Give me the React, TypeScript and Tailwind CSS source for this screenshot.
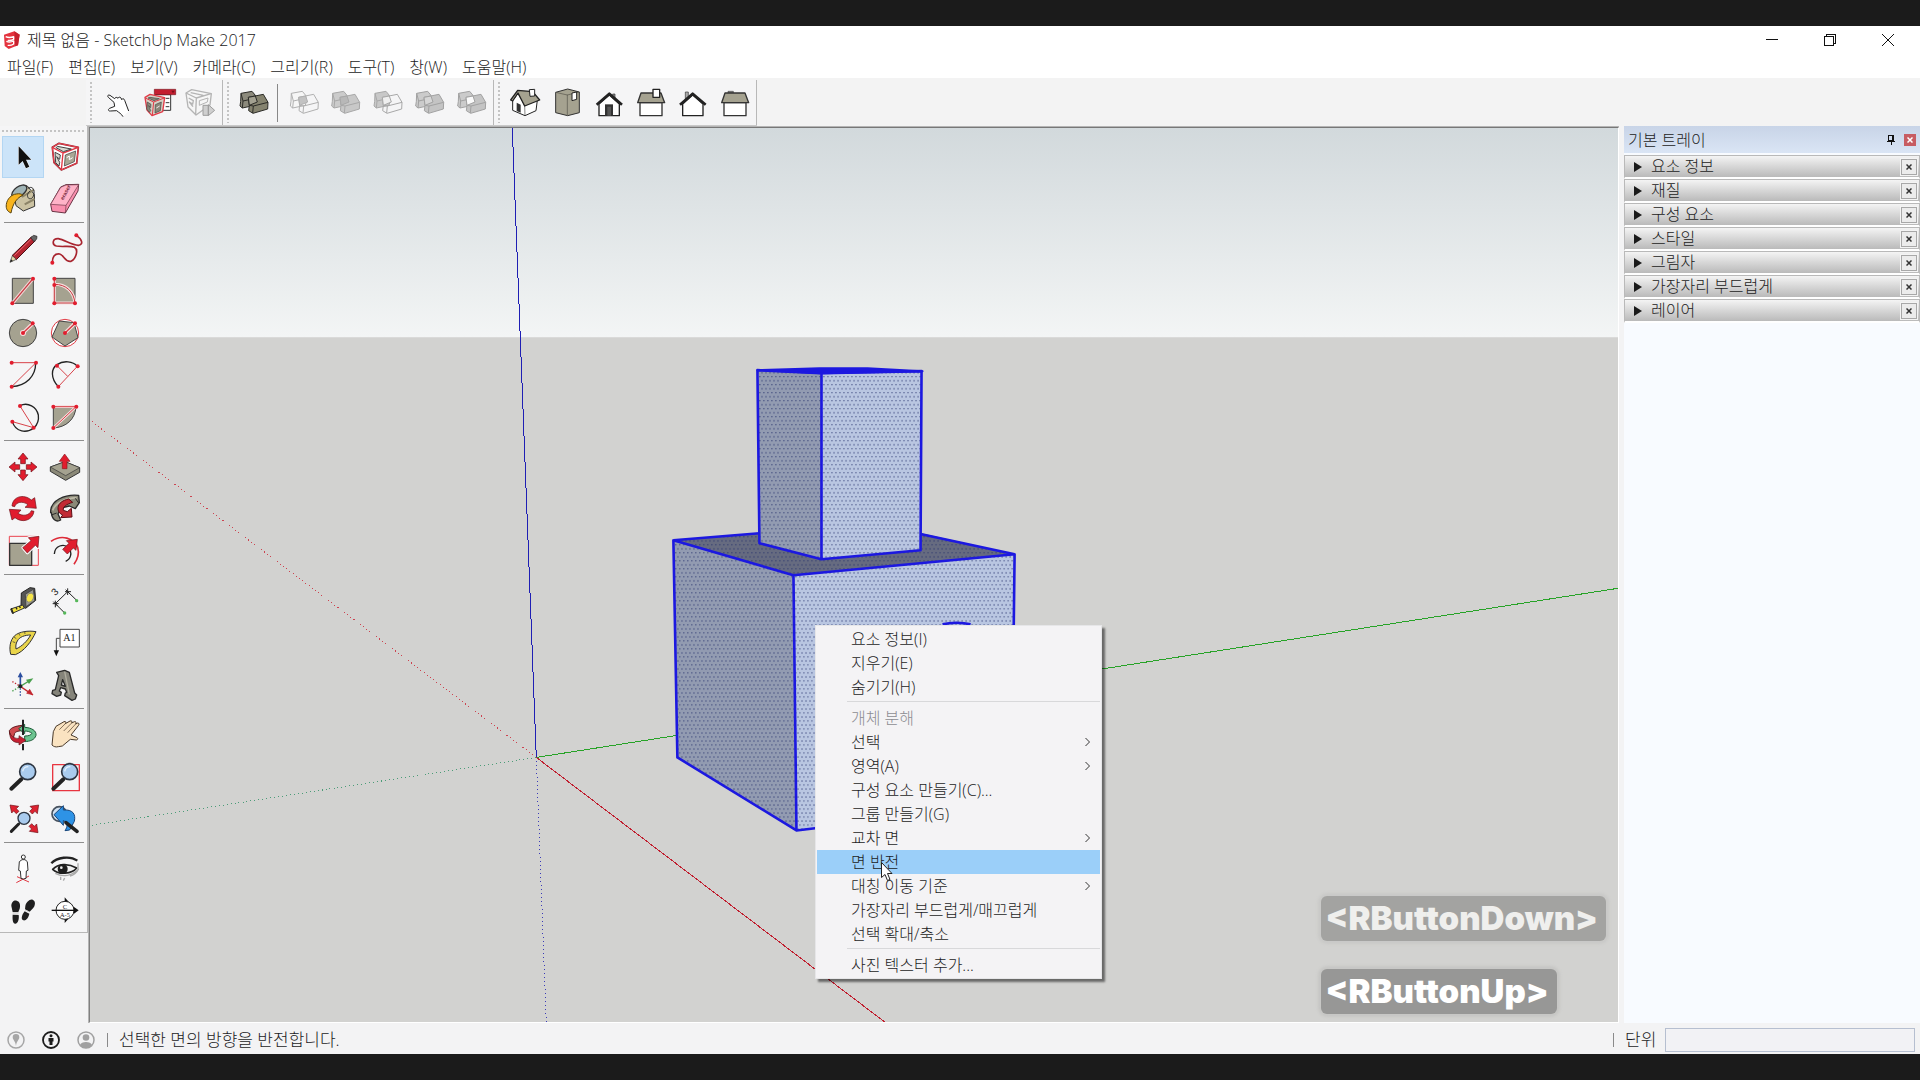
import { useState, type ReactNode } from "react";
import clsx from "clsx";

const FACE = "#a5a290";
const RED = "#e11d2e";

const MENUS = ["파일(F)", "편집(E)", "보기(V)", "카메라(C)", "그리기(R)", "도구(T)", "창(W)", "도움말(H)"];

const TRAY_PANELS = ["요소 정보", "재질", "구성 요소", "스타일", "그림자", "가장자리 부드럽게", "레이어"];

type MenuEntry = { label: string; sub?: boolean; disabled?: boolean } | null;

const CONTEXT_MENU: MenuEntry[] = [
  { label: "요소 정보(I)" },
  { label: "지우기(E)" },
  { label: "숨기기(H)" },
  null,
  { label: "개체 분해", disabled: true },
  { label: "선택", sub: true },
  { label: "영역(A)", sub: true },
  { label: "구성 요소 만들기(C)..." },
  { label: "그룹 만들기(G)" },
  { label: "교차 면", sub: true },
  { label: "면 반전" },
  { label: "대칭 이동 기준", sub: true },
  { label: "가장자리 부드럽게/매끄럽게" },
  { label: "선택 확대/축소" },
  null,
  { label: "사진 텍스터 추가..." },
];

type Tool = { name: string; x: number; y: number; art: ReactNode };

// Tools are drawn on shared sheets of 126 unit tiles, x/y is the tile corner.
function ToolButton({ tool, active, onClick }: { tool: Tool; active?: boolean; onClick?: () => void }) {
  return (
    <button
      type="button"
      title={tool.name}
      aria-label={tool.name}
      onClick={onClick}
      className={clsx("size-[42px] shrink-0", active && "bg-[#cce4f9] outline outline-1 -outline-offset-1 outline-[#b3d6f3]")}
    >
      <svg viewBox={`${tool.x} ${tool.y} 126 126`} className="size-[42px]" fill="none" strokeLinejoin="round">
        {tool.art}
      </svg>
    </button>
  );
}

function Dot({ x, y, r = 6 }: { x: number; y: number; r?: number }) {
  return <circle cx={x} cy={y} r={r} fill={RED} />;
}

/* ---------- large tool set (left) ---------- */

const SELECT_TOOLS: Tool[] = [
  {
    name: "선택",
    x: 6,
    y: 33,
    art: <path d="M56 64v55l12-11 10 22 10-5-10-21h16z" fill="#111" stroke="#fff" strokeWidth="3" paintOrder="stroke" />,
  },
  {
    name: "구성 요소 만들기",
    x: 132,
    y: 33,
    art: (
      <>
        <path d="M157 67l20-12 58 12-5 48-46 20-22-22z" fill="#fff" stroke="#8c2730" strokeWidth="5" />
        <path d="M157 67l20-12 58 12-5 48-46 20-22-22z" stroke="#f0404e" strokeWidth="3" />
        <path d="M157 67l32 17 46-17M189 84l-5 51" stroke="#e33543" strokeWidth="4" />
        <path d="M196 90l31-12-4 32-30 13z" fill="#aaa795" stroke="#333" strokeWidth="2" />
        <path d="M172 64l42 8-24 8-22-12zM165 82l16 8-2 13-9-8 9 17-2 11-10-10z" fill="#d8d8d0" stroke="#444" strokeWidth="3" />
        <path d="M200 98l8-5v11l10-6" stroke="#fff" strokeWidth="3" />
      </>
    ),
  },
  {
    name: "페인트통",
    x: 6,
    y: 159,
    art: (
      <>
        <path d="M40 200l8 42 22 16 34-14-1-36-22-26z" fill="#cbc2a2" stroke="#333" strokeWidth="3" />
        <path d="M66 216l36-22M74 238l30-16" stroke="#8c8468" strokeWidth="6" />
        <ellipse cx="58" cy="199" rx="26" ry="14" transform="rotate(-36 58 199)" fill="#9fb3b5" stroke="#333" strokeWidth="4" />
        <path d="M19 238c2-16 16-30 30-31 10-2 14 0 20 3-16 8-30 22-36 54-10-4-16-12-14-26z" fill="#f8b41e" stroke="#5a4510" strokeWidth="3" />
        <path d="M84 190c12-8 20 2 18 16-2 12-8 18-16 14-6-6-4-16 4-22" stroke="#333" strokeWidth="3" />
      </>
    ),
  },
  {
    name: "지우개",
    x: 132,
    y: 159,
    art: (
      <>
        <path d="M152 238l30-52 16-7 38-1-2 20-38 66-40-5z" fill="#f98fae" stroke="#6a3444" strokeWidth="3" />
        <path d="M152 238l46 3 38-62-38 1-16 7z" fill="#ffb3c8" stroke="#6a3444" strokeWidth="2" />
        <path d="M198 241l-2 23" stroke="#6a3444" strokeWidth="2" />
        <text x="0" y="0" transform="translate(190 226) rotate(-62)" fontSize="16" fontWeight="bold" fill="#7b2a40" fontFamily="Liberation Sans">
          eraser
        </text>
      </>
    ),
  },
];

const DRAW_TOOLS: Tool[] = [
  {
    name: "선",
    x: 6,
    y: 309,
    art: (
      <>
        <path d="M36 392l58-56 12 11-57 57z" fill="#b32631" stroke="#4d1016" strokeWidth="3" />
        <path d="M43 392l52-51" stroke="#e9626c" strokeWidth="3" />
        <path d="M30 412l7-20 12 11z" fill="#e6d6a8" stroke="#333" strokeWidth="2" />
        <path d="M30 412l3-9 6 5z" fill="#222" />
        <path d="M92 338l9-7 10 3-1 8-8 8z" fill="#666" stroke="#222" strokeWidth="2" />
      </>
    ),
  },
  {
    name: "자유형",
    x: 132,
    y: 309,
    art: (
      <>
        <path d="M229 331c18 12 22 28 6 30-20 0-40-16-60-20-18-1-20 18-6 22 18 4 40-2 54 4 14 8 4 36-10 42-18 4-20-18-34-22-16-2-22 10-22 25" stroke="#a8242f" strokeWidth="5" />
        <Dot x={229} y={331} />
        <Dot x={157} y={413} />
      </>
    ),
  },
  {
    name: "직사각형",
    x: 6,
    y: 435,
    art: (
      <>
        <path d="M37 460h63v75H37z" fill={FACE} stroke="#444" strokeWidth="3" />
        <path d="M37 535l62-74" stroke="#f4d6d6" strokeWidth="10" />
        <path d="M37 535l62-74" stroke="#c43c42" strokeWidth="4" />
        <Dot x={37} y={535} />
        <Dot x={99} y={461} />
      </>
    ),
  },
  {
    name: "회전된 직사각형",
    x: 132,
    y: 435,
    art: (
      <>
        <path d="M164 460h61v75h-61z" fill={FACE} stroke="#444" strokeWidth="3" />
        <path d="M163 478c36 0 58 22 62 56H163V461" stroke="#f7dede" strokeWidth="9" />
        <path d="M163 478c36 0 58 22 62 56H163V461" stroke="#c43c42" strokeWidth="3" />
        <Dot x={163} y={461} />
        <Dot x={163} y={480} />
        <Dot x={163} y={535} />
        <Dot x={225} y={535} />
      </>
    ),
  },
  {
    name: "원",
    x: 6,
    y: 561,
    art: (
      <>
        <circle cx="69" cy="624" r="41" fill={FACE} stroke="#444" strokeWidth="3" />
        <path d="M69 624l29-28" stroke="#f7dede" strokeWidth="11" />
        <circle cx="69" cy="624" r="9" fill="#f7dede" />
        <path d="M69 624l29-28" stroke="#d43940" strokeWidth="4" />
        <Dot x={69} y={624} />
        <Dot x={98} y={595} />
      </>
    ),
  },
  {
    name: "다각형",
    x: 132,
    y: 561,
    art: (
      <>
        <circle cx="195" cy="624" r="41" fill="#fff" stroke="#e23a44" strokeWidth="3" />
        <path d="M178 588l44 5 12 45-39 25-39-27z" fill={FACE} stroke="#444" strokeWidth="3" />
        <path d="M195 624l29-28" stroke="#f7dede" strokeWidth="11" />
        <path d="M195 624l29-28" stroke="#d43940" strokeWidth="4" />
        <Dot x={195} y={624} />
        <Dot x={225} y={595} />
      </>
    ),
  },
  {
    name: "호",
    x: 6,
    y: 687,
    art: (
      <>
        <path d="M107 714c0 40-28 68-72 71" stroke="#222" strokeWidth="4" />
        <path d="M35 713h73l-73 72" stroke="#d8434a" strokeWidth="3" />
        <Dot x={35} y={713} />
        <Dot x={108} y={713} />
        <Dot x={35} y={785} />
      </>
    ),
  },
  {
    name: "2점 호",
    x: 132,
    y: 687,
    art: (
      <>
        <path d="M175 785c-24-26-22-54-4-66 20-14 48-10 61 5" stroke="#222" strokeWidth="4" />
        <path d="M171 722l32 32M175 785l57-61" stroke="#d8434a" strokeWidth="3" />
        <Dot x={171} y={722} />
        <Dot x={233} y={724} />
        <Dot x={175} y={785} />
      </>
    ),
  },
  {
    name: "3점 호",
    x: 6,
    y: 813,
    art: (
      <>
        <path d="M60 842c24-12 50 4 55 28 2 16-3 29-13 38-22 18-55 14-65-18" stroke="#222" strokeWidth="4" />
        <path d="M60 843l41 65-64-18" stroke="#d8434a" strokeWidth="3" />
        <Dot x={60} y={843} />
        <Dot x={101} y={908} />
        <Dot x={37} y={890} />
      </>
    ),
  },
  {
    name: "파이",
    x: 132,
    y: 813,
    art: (
      <>
        <path d="M160 845h68c-2 38-30 62-68 64z" fill={FACE} stroke="#444" strokeWidth="3" />
        <path d="M160 909l68-64h-68" stroke="#f7dede" strokeWidth="8" />
        <path d="M160 909l68-64h-68" stroke="#d8434a" strokeWidth="3" />
        <Dot x={160} y={845} />
        <Dot x={229} y={845} />
        <Dot x={160} y={909} />
      </>
    ),
  },
];

const EDIT_TOOLS: Tool[] = [
  {
    name: "이동",
    x: 6,
    y: 33,
    art: (
      <path
        d="M69 54l15 18h-8v14H62V72h-8zM69 137l-15-18h8v-14h14v14h8zM27 96l18-15v8h14v14H45v8zM111 96l-18-15v8H79v14h14v8z"
        fill={RED}
        stroke="#6d1118"
        strokeWidth="2"
      />
    ),
  },
  {
    name: "밀기/끌기",
    x: 132,
    y: 33,
    art: (
      <>
        <path d="M151 96l44-16 44 18v14l-42 24-46-27z" fill="#8b8978" stroke="#333" strokeWidth="3" />
        <path d="M151 96l44-16 44 18-42 24z" fill={FACE} stroke="#333" strokeWidth="2" />
        <path d="M194 57l16 22h-9v22h-14V79h-9z" fill={RED} stroke="#8c1820" strokeWidth="2" />
      </>
    ),
  },
  {
    name: "회전",
    x: 6,
    y: 159,
    art: (
      <path
        d="M36 213c2-28 34-38 58-18l10-7 5 32-34-3 9-8c-16-12-36-8-40 6zM102 229c-4 28-36 36-57 19l-9 7-8-32 35 2-9 10c15 10 34 6 40-8z"
        fill={RED}
        stroke="#6d1118"
        strokeWidth="2"
      />
    ),
  },
  {
    name: "따라가기",
    x: 132,
    y: 159,
    art: (
      <>
        <path d="M152 233c-2-38 44-56 84-52l2 22-12 18-18-8-26 6-8 18 8 18c-14 8-26-2-28-22z" fill="#8b8978" stroke="#2a2a2a" strokeWidth="4" />
        <path d="M158 226c10-24 40-36 72-38" stroke="#bdbaa8" strokeWidth="5" />
        <path d="M226 190l10 14M154 240l16-6" stroke="#2a2a2a" strokeWidth="3" />
        <path d="M174 218c2-14 14-22 32-26l12 10c-20 6-30 14-28 24l12 4 12-10 2 26-34 2 6-8c-10-4-15-12-14-22z" fill="#c22a34" stroke="#5d0f16" strokeWidth="3" />
      </>
    ),
  },
  {
    name: "배율",
    x: 6,
    y: 285,
    art: (
      <>
        <path d="M28 304h87v87H28z" stroke="#ea4450" strokeWidth="3" />
        <path d="M29 325h66v66H29z" fill={FACE} stroke="#333" strokeWidth="4" />
        <path d="M117 304l-3 34-8-7-24 23-14-16 25-21-8-9z" fill={RED} stroke="#fff" strokeWidth="8" paintOrder="stroke" />
        <path d="M117 304l-3 34-8-7-24 23-14-16 25-21-8-9z" stroke="#6d1118" strokeWidth="2" />
      </>
    ),
  },
  {
    name: "오프셋",
    x: 132,
    y: 285,
    art: (
      <>
        <path d="M153 319c32-22 68-10 80 18 5 18 0 36-11 51" stroke="#dd2b38" strokeWidth="5" />
        <path d="M163 357c1-24 28-34 43-18 12 14 6 34-9 40" stroke="#222" strokeWidth="4" />
        <path d="M232 313l-4 33-8-7-18 18-14-14 19-18-8-8z" fill={RED} stroke="#6d1118" strokeWidth="2" />
      </>
    ),
  },
];

const MEASURE_TOOLS: Tool[] = [
  {
    name: "줄자 도구",
    x: 6,
    y: 435,
    art: (
      <>
        <path d="M64 474l26-16 14 2 3 36-30 24-14-6z" fill="#555" stroke="#222" strokeWidth="3" />
        <path d="M76 478l24-15 4 34-26 18z" fill="#9b9b94" stroke="#333" strokeWidth="2" />
        <ellipse cx="90" cy="488" rx="10" ry="14" fill="#f6e548" stroke="#777" strokeWidth="2" transform="rotate(20 90 488)" />
        <path d="M68 510L32 522l5 13 36-16z" fill="#f3e23e" stroke="#333" strokeWidth="3" />
        <path d="M34 520l6 16M48 517l3 6M58 513l3 6" stroke="#222" strokeWidth="4" />
      </>
    ),
  },
  {
    name: "치수",
    x: 132,
    y: 435,
    art: (
      <>
        <path d="M166 506l37-36M166 506l28 28M203 470l27 26M158 506h18M166 497v20M195 470h18M203 460v20M160 500l13 13M197 464l13 13" stroke="#222" strokeWidth="3" />
        <text x="0" y="0" transform="translate(166 484) rotate(-45)" fontSize="30" fill="#222" fontFamily="Liberation Sans">
          3
        </text>
        <circle cx="194" cy="534" r="5" fill="#56b85a" />
        <circle cx="230" cy="497" r="5" fill="#56b85a" />
      </>
    ),
  },
  {
    name: "각도기",
    x: 6,
    y: 561,
    art: (
      <>
        <path d="M108 590c-24-4-50 0-64 12-14 14-17 36-12 56l14 1c26-10 48-38 62-69z" fill="#ead54a" stroke="#333" strokeWidth="3" />
        <path d="M92 600c-18 0-34 6-40 18-5 8-5 16-4 24 18-8 34-24 44-42z" fill="#f7f7f7" stroke="#333" strokeWidth="3" />
        <path d="M38 620l8 3M42 606l7 5M56 595l4 7M74 590l1 7" stroke="#333" strokeWidth="2" />
      </>
    ),
  },
  {
    name: "텍스트",
    x: 132,
    y: 561,
    art: (
      <>
        <path d="M180 583h58v53h-58z" fill="#fff" stroke="#444" strokeWidth="3" />
        <text x="190" y="619" fontSize="30" fill="#222" fontFamily="Liberation Serif">
          A1
        </text>
        <path d="M179 610h-10v38" stroke="#444" strokeWidth="3" />
        <path d="M161 646h16l-8 18z" fill="#111" />
      </>
    ),
  },
  {
    name: "축",
    x: 6,
    y: 687,
    art: (
      <>
        <path d="M61 754l38 26" stroke="#c2262e" strokeWidth="4" />
        <path d="M98 779l-18-4 9-12z" fill="#c2262e" stroke="#c2262e" strokeWidth="2" />
        <path d="M61 754V722" stroke="#2c4fa0" strokeWidth="5" />
        <path d="M61 711l8 16H53z" fill="#2c4fa0" />
        <path d="M61 754l26-16" stroke="#4aa04e" strokeWidth="4" />
        <path d="M100 730l-13 17-9-13z" fill="#4aa04e" />
        <path d="M61 760v26" stroke="#2c4fa0" strokeWidth="4" strokeDasharray="4 5" />
        <path d="M56 751l-20-12" stroke="#c2262e" strokeWidth="4" strokeDasharray="4 5" />
        <path d="M56 757l-20 12" stroke="#4aa04e" strokeWidth="4" strokeDasharray="4 5" />
        <circle cx="61" cy="754" r="6" fill="#222" />
      </>
    ),
  },
  {
    name: "3D 텍스트",
    x: 132,
    y: 687,
    art: (
      <>
        <path
          fillRule="evenodd"
          d="M170 712l24-6 14 6 16 62 6 6-4 12-10 4-22-14 2-8 4-2-4-10-14-4-4 10 6 4-2 8-12 4-14-8 2-10 8-2 10-42zM188 734l-4 16 12 4z"
          fill="#85847a"
          stroke="#2a2a2a"
          strokeWidth="4"
        />
        <path d="M194 710l14 68" stroke="#b0aea0" strokeWidth="4" />
      </>
    ),
  },
];

const CAMERA_TOOLS: Tool[] = [
  {
    name: "궤도",
    x: 6,
    y: 42,
    art: (
      <>
        <path d="M28 92c6-10 20-14 38-16v16c-14 1-20 4-22 8l-4 14c-8-4-12-12-12-22z" fill="#cf4a4e" stroke="#5d1a1e" strokeWidth="3" />
        <path d="M108 106c-4 14-18 18-34 19v-17c12 0 18-2 22-8-6-5-14-7-22-7v8l-18-15 18-13v9c20 1 36 10 34 24z" fill="#6cc490" stroke="#1d5c38" strokeWidth="3" />
        <path d="M29 98c6 14 18 18 28 17v-8l21 14-21 14v-7c-16 0-28-8-28-30z" fill="#c51f32" stroke="#5d1a1e" strokeWidth="2" />
        <path d="M69 59v46M69 132v19" stroke="#222" strokeWidth="6" />
      </>
    ),
  },
  {
    name: "이동 보기",
    x: 132,
    y: 42,
    art: (
      <>
        <path
          d="M156 135l4-40 8-16 24-14c5-2 8 2 4 6l14-8c5-2 8 2 5 6l8-4c5-1 7 3 4 7l6-3c5 0 5 5 2 8l-22 28 18 8c4 2 2 7-2 7l-18-2-24 20-12 2c-8 2-14 0-19-5z"
          fill="#fae3c1"
          stroke="#4a3a2a"
          strokeWidth="3"
        />
        <path d="M196 71l-18 18M215 69l-24 24M227 72l-24 26" stroke="#4a3a2a" strokeWidth="2" />
      </>
    ),
  },
  {
    name: "확대/축소",
    x: 6,
    y: 168,
    art: (
      <>
        <path d="M34 266l30-28" stroke="#222" strokeWidth="12" strokeLinecap="round" />
        <circle cx="83" cy="215" r="24" fill="#a9cbee" stroke="#2c3440" strokeWidth="5" />
        <path d="M68 214c2-10 10-14 17-14" stroke="#e4f0fb" strokeWidth="4" />
      </>
    ),
  },
  {
    name: "창 확대/축소",
    x: 132,
    y: 168,
    art: (
      <>
        <path d="M158 194h80v78h-80z" stroke="#e83540" strokeWidth="4" />
        <path d="M160 266l30-28" stroke="#222" strokeWidth="12" strokeLinecap="round" />
        <circle cx="209" cy="215" r="24" fill="#a9cbee" stroke="#2c3440" strokeWidth="5" />
        <path d="M194 214c2-10 10-14 17-14" stroke="#e4f0fb" strokeWidth="4" />
      </>
    ),
  },
  {
    name: "범위 확대/축소",
    x: 6,
    y: 294,
    art: (
      <>
        <path d="M34 394l22-22" stroke="#222" strokeWidth="9" strokeLinecap="round" />
        <circle cx="72" cy="355" r="18" fill="#a9cbee" stroke="#2c3440" strokeWidth="4" />
        <path d="M30 315l26 4-7 7 8 8-8 7-8-8-6 6zM116 315l-4 26-7-7-8 8-8-8 8-8-7-7zM114 398l-26-4 7-7-8-8 8-8 8 8 7-7z" fill="#dc2230" stroke="#6d1118" strokeWidth="2" />
      </>
    ),
  },
  {
    name: "이전",
    x: 132,
    y: 294,
    art: (
      <>
        <circle cx="178" cy="342" r="22" fill="#cfe0f2" stroke="#47525f" strokeWidth="5" />
        <path d="M162 344l28-27v13c28-2 38 12 33 34l-14 26-14 2c8-12 10-24-5-30v14z" fill="#2e93e6" stroke="#17457a" strokeWidth="3" />
        <path d="M198 368l33 26" stroke="#222" strokeWidth="11" strokeLinecap="round" />
      </>
    ),
  },
];

const WALK_TOOLS: Tool[] = [
  {
    name: "카메라 배치",
    x: 6,
    y: 444,
    art: (
      <>
        <path d="M49 548l38-20M51 530l36 16" stroke="#e03640" strokeWidth="3" />
        <circle cx="70" cy="471" r="6" fill="#fff" stroke="#333" strokeWidth="3" />
        <path d="M66 479h9l7 6 2 26-5 2-1 22-8 2-7-2-2-22-5-2 2-26z" fill="#fff" stroke="#333" strokeWidth="3" />
      </>
    ),
  },
  {
    name: "둘러보기",
    x: 132,
    y: 444,
    art: (
      <>
        <path d="M154 490c16-18 56-24 78-8" stroke="#222" strokeWidth="7" />
        <path d="M158 508c16-16 44-20 72-4-14 18-54 22-72 4z" fill="#f2f2f2" stroke="#222" strokeWidth="5" />
        <circle cx="188" cy="507" r="15" fill="#1c1c1c" />
        <circle cx="184" cy="503" r="4" fill="#eee" />
        <path d="M166 520c22 12 48 8 70-12M182 530v10M194 534l-4 8M210 528c12-2 20-10 26-22M234 490v18" stroke="#aaa" strokeWidth="4" />
      </>
    ),
  },
  {
    name: "이동",
    x: 6,
    y: 570,
    art: (
      <>
        <path d="M34 618c0-12 8-18 16-16 10 2 12 14 9 24l-4 10H38zM38 644l18 1c2 12-2 26-10 26s-9-14-8-27z" fill="#1f1f1f" />
        <path d="M76 618c2-12 14-22 22-19 10 4 8 18 1 26l-10 10-14-7zM74 634l14 7c-2 12-10 22-18 20s-5-16 4-27z" fill="#1f1f1f" />
        <path d="M38 638h18M38 642h18M75 630l13 6" stroke="#bbb" strokeWidth="2" />
      </>
    ),
  },
  {
    name: "단면 평면",
    x: 132,
    y: 570,
    art: (
      <>
        <path d="M194 592l34 39-34 38z" fill="#111" />
        <circle cx="195" cy="631" r="27" fill="#fff" stroke="#222" strokeWidth="3" />
        <path d="M155 631h76" stroke="#111" strokeWidth="4" />
        <path d="M222 621l14 10-14 10z" fill="#111" />
        <text x="188" y="626" fontSize="20" fill="#222" fontFamily="Liberation Serif">
          C
        </text>
        <text x="180" y="651" fontSize="19" fill="#222" fontFamily="Liberation Serif">
          A-5
        </text>
      </>
    ),
  },
];

const TOOL_GROUPS = [SELECT_TOOLS, DRAW_TOOLS, EDIT_TOOLS, MEASURE_TOOLS, CAMERA_TOOLS, WALK_TOOLS];

/* ---------- top tool bars ---------- */

const WAREHOUSE_TOOLS: Tool[] = [
  {
    name: "상호 작용",
    x: 36,
    y: 12,
    art: (
      <path
        d="M134 99l-12-32c-2-6-7-6-9-2l-2-5c-3-4-8-3-9 1-3-4-8-4-10 1L78 52c-6-3-9 2-5 6l17 15 2 12-15 6c-6 3-4 9 2 8l19-1c7 6 14 9 19 18"
        fill="#fff"
        stroke="#222"
        strokeWidth="3"
      />
    ),
  },
  {
    name: "구성 요소 속성",
    x: 162,
    y: 12,
    art: (
      <>
        <path d="M214 50h46v47h-46z" fill="#fff" stroke="#333" strokeWidth="3" />
        <path d="M211 34h64v16h-64z" fill="#c41e30" stroke="#7a121d" strokeWidth="2" />
        <path d="M262 38h10l-5 8z" fill="#7a121d" />
        <path d="M245 61h11M245 74h11M245 86h11" stroke="#333" strokeWidth="3" />
        <path d="M183 58l15-9 44 10-6 42-32 12-15-17z" fill="#d5d1c4" stroke="#e23a48" strokeWidth="4" />
        <path d="M184 60l25 12 32-12M209 72l-4 40" stroke="#e23a48" strokeWidth="3" />
        <path d="M198 58l28 4-16 6-18-8zM190 72l11 7-1 10-6-6 6 15-4 5-8-10zM214 80l18-8-3 26-16 7z" fill="#8b8779" stroke="#444" strokeWidth="2" />
        <path d="M217 90l10-6" stroke="#f3e6e6" strokeWidth="3" />
      </>
    ),
  },
  {
    name: "구성 요소 옵션",
    x: 288,
    y: 12,
    art: (
      <>
        <path d="M306 45l17-10 59 12-4 34-42 30-24-24z" fill="#f6f6f6" stroke="#b4b4b4" strokeWidth="4" />
        <path d="M306 45l31 15 44-13M337 60l-2 48M320 44l38 8M314 60l14 8-2 10-10-6 11 14" stroke="#b4b4b4" strokeWidth="4" />
        <path d="M346 68l26-8-2 12-24 10z" stroke="#b4b4b4" strokeWidth="3" />
        <path d="M357 82h16v30h-16zM373 80l19 17-19 16z" fill="#cfcfcf" stroke="#9d9d9d" strokeWidth="3" />
      </>
    ),
  },
];

function Solid({ x, a, b, overlap, stroke }: { x: number; a: string; b: string; overlap: string; stroke: string }) {
  return (
    <g transform={`translate(${x} 39)`} stroke={stroke} strokeWidth="3">
      <path d="M3 7L36 1l10 12 1 22-2 8-38 8-7-6 2-14z" fill={a} />
      <path d="M3 7l6 23-2 21M9 30l18-4" />
      <path d="M25 19l45-9 14 24-1 20-44 13-13-8 2-16z" fill={b} />
      <path d="M84 34L40 45l-2 21M40 45l-12-2" />
      <path d="M25 19l21-4 6 18-24 10z" fill={overlap} />
    </g>
  );
}

const SHELL_TOOL: Tool = {
  name: "외부 셸",
  x: 444,
  y: 12,
  art: <Solid x={465} a="#8c8a7c" b="#85836f" overlap="#a3a191" stroke="#2b2b27" />,
};

const SOLID_TOOLS: Tool[] = [
  { name: "교차", x: 594, y: 12, art: <Solid x={616} a="#f6f6f6" b="none" overlap="#c2c2c2" stroke="#b0b0b0" /> },
  { name: "결합", x: 720, y: 12, art: <Solid x={740} a="#cbcbcb" b="#c8c8c8" overlap="#b8b8b8" stroke="#a8a8a8" /> },
  { name: "빼기", x: 846, y: 12, art: <Solid x={867} a="#c8c8c8" b="none" overlap="#efefef" stroke="#a8a8a8" /> },
  { name: "자르기", x: 972, y: 12, art: <Solid x={992} a="#cbcbcb" b="#c4c4c4" overlap="#d6d6d6" stroke="#a2a2a2" /> },
  { name: "분할", x: 1098, y: 12, art: <Solid x={1118} a="#cbcbcb" b="#c4c4c4" overlap="#fafafa" stroke="#a2a2a2" /> },
];

const VIEW_TOOLS: Tool[] = [
  {
    name: "등각 투영",
    x: 72,
    y: 6,
    art: (
      <>
        <path d="M98 62l16-22 20 36 38-16-4 32-33 15-37-16z" fill="#fff" stroke="#222" strokeWidth="3" />
        <path d="M134 76l1 31" stroke="#444" strokeWidth="2" />
        <path d="M110 68l12 6v24l-12-5z" fill="#333" />
        <path d="M92 60l21-29 45 4 21 25-45 18-20-39-16 24z" fill={FACE} stroke="#222" strokeWidth="4" />
        <path d="M148 29l16-1v20l-14 1z" fill="#fff" stroke="#222" strokeWidth="3" />
      </>
    ),
  },
  {
    name: "맨 위",
    x: 198,
    y: 6,
    art: (
      <>
        <path d="M227 37l36-10 35 9v62l-35 9-36-9z" fill={FACE} stroke="#333" strokeWidth="3" />
        <path d="M262 44v62M227 37l35 8 36-9" stroke="#55534a" strokeWidth="2" />
        <path d="M276 39l14-3v22l-14 4z" fill="#fff" stroke="#222" strokeWidth="3" />
      </>
    ),
  },
  {
    name: "앞",
    x: 324,
    y: 6,
    art: (
      <>
        <path d="M398 42h7v12h-7z" fill="#888" stroke="#333" strokeWidth="2" />
        <path d="M357 72v35h61V72l-30-27z" fill="#fff" stroke="#222" strokeWidth="4" />
        <path d="M350 74l38-33 38 33" stroke="#222" strokeWidth="8" />
        <path d="M375 73h24v34h-24z" fill="#333" />
        <path d="M382 80h11v27h-11z" fill="#555" />
      </>
    ),
  },
  {
    name: "오른쪽",
    x: 450,
    y: 6,
    art: (
      <>
        <path d="M480 68h66v39h-66z" fill="#fff" stroke="#333" strokeWidth="4" />
        <path d="M483 39h60l11 29h-81z" fill={FACE} stroke="#333" strokeWidth="4" />
        <path d="M519 28h20v24h-20z" fill="#fff" stroke="#222" strokeWidth="4" />
      </>
    ),
  },
  {
    name: "뒤로",
    x: 576,
    y: 6,
    art: (
      <>
        <path d="M616 36h9v20h-9z" fill="#aaa" stroke="#333" strokeWidth="2" />
        <path d="M608 72v35h61V72l-31-27z" fill="#fff" stroke="#222" strokeWidth="4" />
        <path d="M600 74l38-33 39 33" stroke="#222" strokeWidth="8" />
      </>
    ),
  },
  {
    name: "왼쪽",
    x: 702,
    y: 6,
    art: (
      <>
        <path d="M744 34h16v6h-16z" fill="#888" stroke="#444" strokeWidth="2" />
        <path d="M732 68h66v39h-66z" fill="#fff" stroke="#333" strokeWidth="4" />
        <path d="M735 39h60l11 29h-81z" fill={FACE} stroke="#333" strokeWidth="4" />
      </>
    ),
  },
];

/* ---------- parts ---------- */

function Gripper() {
  return (
    <span className="mx-1 my-0.5 w-0.5 shrink-0 self-stretch bg-[repeating-linear-gradient(to_bottom,#c4c4c4_0_2px,transparent_2px_4px)]" />
  );
}

function TitleBar() {
  return (
    <header className="flex h-[30px] items-center bg-white px-[3px] pb-0.5">
      <svg viewBox="0 0 54 60" className="h-5 w-[18px]" fill="none" strokeLinejoin="round">
        <path d="M3 14L34 4l16 10-5 32-28 11-12-9z" fill="#e4333e" />
        <path d="M34 4l16 10-5 32-8 3z" fill="#c5222e" />
        <path d="M8 20c8 4 16 3 24 0v8c-8 4-12 4-18 3M10 34c8 4 14 3 22-1v9c-6 4-12 5-18 4" stroke="#fff" strokeWidth="4" />
      </svg>
      <h1 className="pl-1.5 text-base leading-6 font-light text-[#222]">제목 없음 - SketchUp Make 2017</h1>
      <div className="ml-auto flex">
        <button type="button" aria-label="최소화" className="flex h-7 w-[58px] items-center justify-center">
          <svg viewBox="0 0 12 12" className="size-3" stroke="#111" shapeRendering="crispEdges">
            <path d="M0 5.5h12" />
          </svg>
        </button>
        <button type="button" aria-label="이전 크기로" className="flex h-7 w-[58px] items-center justify-center">
          <svg viewBox="0 0 12 12" className="size-3" fill="none" stroke="#111" shapeRendering="crispEdges">
            <path d="M.5 2.5h9v9h-9zM2.5 2.5v-2h9v9h-2" />
          </svg>
        </button>
        <button type="button" aria-label="닫기" className="flex h-7 w-[58px] items-center justify-center">
          <svg viewBox="0 0 12 12" className="size-3" stroke="#111">
            <path d="M0 0l12 12M12 0L0 12" />
          </svg>
        </button>
      </div>
    </header>
  );
}

function MenuBar() {
  return (
    <nav className="flex h-[22px] items-center gap-[15px] bg-white pl-[7px]">
      {MENUS.map((m) => (
        <button key={m} type="button" className="text-base leading-5 font-light whitespace-nowrap">
          {m}
        </button>
      ))}
    </nav>
  );
}

function TopToolbar() {
  return (
    <div className="flex h-12 bg-[#f3f3f3] pt-0.5 pl-[86px]">
      <div className="flex h-[46px] items-stretch border-b border-[#c9c9c9] bg-[#f5f5f6]">
        <div className="flex items-center border-r border-[#b8b8b8]">
          <Gripper />
          {WAREHOUSE_TOOLS.map((t) => <ToolButton key={t.name} tool={t} />)}
        </div>
        <div className="flex items-center border-r border-[#b8b8b8]">
          <Gripper />
          <ToolButton tool={SHELL_TOOL} />
          <span className="mr-[5px] ml-0.5 h-[38px] w-px bg-[#888]" />
          {SOLID_TOOLS.map((t) => <ToolButton key={t.name} tool={t} />)}
        </div>
        <div className="flex items-center border-r border-[#b8b8b8]">
          <Gripper />
          {VIEW_TOOLS.map((t) => <ToolButton key={t.name} tool={t} />)}
        </div>
      </div>
    </div>
  );
}

function LeftToolbar() {
  const [active, setActive] = useState("선택-0");
  return (
    <aside className="w-[88px] shrink-0">
      <div className="border-r border-b border-[#b8b8b8] bg-[#f5f5f6] pt-1 pr-px pl-0.5">
        <div className="mb-1 h-0.5 bg-[repeating-linear-gradient(to_right,#c4c4c4_0_2px,transparent_2px_4px)]" />
        {TOOL_GROUPS.map((group, i) => (
          <div key={i}>
            {i > 0 && <div className="mx-0.5 mt-0.5 mb-[5px] h-px bg-[#8e8e8e]" />}
            <div className="grid grid-cols-[42px_42px]">
              {group.map((t) => {
                const id = `${t.name}-${i}`;
                return <ToolButton key={id} tool={t} active={active === id} onClick={() => setActive(id)} />;
              })}
            </div>
          </div>
        ))}
      </div>
    </aside>
  );
}

function Scene() {
  return (
    <svg viewBox="91 128 1527 894" preserveAspectRatio="xMinYMin slice" className="block size-full" fill="none">
      <defs>
        <linearGradient id="sky" x1="0" y1="0" x2="0" y2="1">
          <stop offset="0" stopColor="#d2d9dc" />
          <stop offset="1" stopColor="#f3f5f5" />
        </linearGradient>
        <pattern id="dots" width="4" height="8" patternUnits="userSpaceOnUse">
          <path d="M0 0h1v1H0zM2 4h1v1H2z" fill="#24306b" />
        </pattern>
      </defs>
      <path d="M91 128h1527v209H91z" fill="url(#sky)" />
      <path d="M91 337h1527v685H91z" fill="#d2d2d0" />

      {/* axes */}
      <g shapeRendering="crispEdges">
        <path d="M513 128l24 629" stroke="#1f1fb4" />
        <path d="M537 757l10 265" stroke="#3a3ab8" strokeDasharray="1 3" />
        <path d="M537 757l1081-169" stroke="#27a327" />
        <path d="M537 757L91 825" stroke="#4c9c78" strokeDasharray="1 3" />
        <path d="M537 757l349 265" stroke="#c02030" />
        <path d="M537 757L91 420" stroke="#cc4450" strokeDasharray="1 3" />
      </g>

      {/* stacked boxes, all faces selected */}
      <path d="M674 540l120 35 3 255-119-73z" fill="#929bb1" />
      <path d="M794 575l221-21-3 250-215 26z" fill="#b9c6e1" />
      <path d="M674 540l86-7h162l93 21-221 21z" fill="#666b80" />
      <path d="M759 370l63 3v186l-62-16z" fill="#929bb1" />
      <path d="M822 373l100-2-1 179-99 9z" fill="#b9c6e1" />
      <path
        d="M674 540l120 35 3 255-119-73zM794 575l221-21-3 250-215 26zM674 540l86-7h162l93 21-221 21zM759 370l63 3v186l-62-16zM822 373l100-2-1 179-99 9z"
        fill="url(#dots)"
        shapeRendering="crispEdges"
      />
      <g stroke="#1c18e0" strokeWidth="2.6" strokeLinejoin="round">
        <path d="M674 540l120 35 3 255-119-73zM794 575l221-21-3 250-215 26M674 540l86-7M922 534l93 20" />
        <path d="M758 370l64 3v186l-62-16zM822 373l100-2-1 179-99 9" />
        <path d="M758 370l62-2h48l55 3-101 2z" fill="#1c18e0" strokeWidth="2" />
        <path d="M943 624c8-2 20-2 28 0" />
      </g>
    </svg>
  );
}

function ContextMenu() {
  const [current, setCurrent] = useState("면 반전");
  return (
    <div
      role="menu"
      className="absolute top-[497px] left-[725px] w-[287px] border border-[#e6e6e8] bg-[#f4f3f5] p-px shadow-[3px_3px_2px_rgba(0,0,0,0.5)]"
    >
      {CONTEXT_MENU.map((item, i) =>
        item === null ? (
          <div key={i} role="separator" className="mt-0.5 mb-1 ml-[30px] h-px bg-[#d8d8da]" />
        ) : (
          <button
            key={i}
            type="button"
            role="menuitem"
            disabled={item.disabled}
            onMouseEnter={() => setCurrent(item.label)}
            className={clsx(
              "flex h-6 w-full items-center justify-between pr-2.5 pl-[34px] text-left text-base leading-6 font-light whitespace-nowrap",
              item.disabled ? "text-[#8c8c92]" : "text-[#1c1c24]",
              current === item.label && "bg-[#9bcff9]",
            )}
          >
            {item.label}
            {item.sub && (
              <svg viewBox="0 0 5 10" className="h-2.5 w-[5px]" fill="none" stroke="#333">
                <path d="M.5 1l4 4-4 4" />
              </svg>
            )}
          </button>
        ),
      )}
      <svg viewBox="0 0 12 20" className="pointer-events-none absolute top-[236px] left-[65px] h-5 w-3">
        <path d="M.5.5v15l3.500-3 2.500 6 2.500-1-2.500-6h4.500z" fill="#fff" stroke="#222" />
      </svg>
    </div>
  );
}

function KeyOverlay() {
  return (
    <div className="absolute right-3 bottom-2 flex flex-col items-start gap-7 font-[Inter,sans-serif] text-[33px] leading-[45px] font-black">
      <kbd className="rounded-md bg-[#a3a3a1] pr-2 pl-[5px] font-[inherit] text-[#efefed] shadow-[0_0_3px_3px_#c9c9c7]">&lt;RButtonDown&gt;</kbd>
      <kbd className="rounded-md bg-[#979796] pr-2 pl-[5px] font-[inherit] text-white shadow-[0_0_3px_3px_#c6c6c4]">&lt;RButtonUp&gt;</kbd>
    </div>
  );
}

function Tray() {
  return (
    <aside className="ml-[5px] w-[296px] shrink-0 bg-[#f8fbff]">
      <div className="mb-0.5 flex h-[27px] items-center bg-linear-to-b from-[#c8d4e7] to-[#dae5f5] pr-1 pl-1">
        <h2 className="grow text-base leading-6 font-light text-[#222]">기본 트레이</h2>
        <button type="button" aria-label="자동 숨기기" className="mr-[9px]">
          <svg viewBox="0 0 8 10" className="h-2.5 w-2" stroke="#111" fill="none" shapeRendering="crispEdges">
            <path d="M1.500.5h5v5h-5zM5.500.5v5M0 6.500h8M4.500 6v4" />
          </svg>
        </button>
        <button type="button" aria-label="닫기" className="flex size-3 items-center justify-center bg-[#c75c62]">
          <svg viewBox="0 0 6 6" className="size-1.5" stroke="#fff" strokeWidth="1.500">
            <path d="M.5.5l5 5M5.500.5l-5 5" />
          </svg>
        </button>
      </div>
      <ul>
        {TRAY_PANELS.map((name) => (
          <li key={name} className="flex h-6 items-center border border-b-2 border-[#b9b9b9] border-b-white bg-linear-to-b from-[#f4f4f4] to-[#bababa] pr-0.5">
            <button type="button" className="flex grow items-center pl-[9px] text-left">
              <svg viewBox="0 0 8 10" className="h-2.5 w-2" fill="#1a1a1a">
                <path d="M0 0l8 5-8 5z" />
              </svg>
              <span className="pb-0.5 pl-[9px] text-base leading-5 font-light text-[#222]">{name}</span>
            </button>
            <button
              type="button"
              aria-label={`${name} 닫기`}
              className="flex size-4 items-center justify-center border border-[#a8a8a8] bg-[#ececec] outline outline-1 outline-[#f4f4f4]"
            >
              <svg viewBox="0 0 6 6" className="size-1.5" stroke="#333" strokeWidth="1.500">
                <path d="M.5.5l5 5M5.500.5l-5 5" />
              </svg>
            </button>
          </li>
        ))}
      </ul>
    </aside>
  );
}

function StatusBar() {
  return (
    <footer className="flex h-[30px] items-center bg-[#f3f3f4] pt-0.5 pr-[5px] pl-[7px]">
      <button type="button" aria-label="위치 정보">
        <svg viewBox="0 0 18 18" className="size-[18px]" fill="none">
          <circle cx="9" cy="9" r="8" stroke="#a6a6a6" strokeWidth="1.500" />
          <path d="M9 3a3.300 3.300 0 0 1 3.300 3.300C12.300 9 9.600 10 9 15 8.400 10 5.700 9 5.700 6.300A3.300 3.300 0 0 1 9 3z" fill="#a6a6a6" />
        </svg>
      </button>
      <button type="button" aria-label="크레딧" className="ml-[17px]">
        <svg viewBox="0 0 18 18" className="size-[18px]" fill="none">
          <circle cx="9" cy="9" r="8" stroke="#1c1c1c" strokeWidth="1.800" />
          <circle cx="9" cy="4.800" r="1.500" fill="#1c1c1c" />
          <path d="M6.500 7h5v3.500h-1V14h-3v-3.500h-1z" fill="#1c1c1c" />
        </svg>
      </button>
      <button type="button" aria-label="로그인" className="ml-[17px]">
        <svg viewBox="0 0 18 18" className="size-[18px]" fill="none">
          <circle cx="9" cy="9" r="8" stroke="#a0a0a0" strokeWidth="1.500" />
          <circle cx="9" cy="6.500" r="3.300" fill="#a0a0a0" />
          <path d="M3 14c1-4 11-4 12 0-3 4-9 4-12 0z" fill="#a0a0a0" />
        </svg>
      </button>
      <span className="mr-[11px] ml-3 h-3.5 w-px bg-[#8a8a8a]" />
      <p className="grow text-[17px] leading-6 font-light">선택한 면의 방향을 반전합니다.</p>
      <span className="mr-[11px] h-3.5 w-px bg-[#8a8a8a]" />
      <label htmlFor="units" className="w-10 text-[17px] leading-6 font-light">단위</label>
      <input id="units" type="text" className="h-6 w-[250px] border border-[#b6bfd0] bg-[#f2f2f5] px-1 text-base outline-none" />
    </footer>
  );
}

export default function App() {
  return (
    <div className="flex h-screen flex-col bg-[#1b1b1b] py-[26px] font-['Open_Sans','Noto_Sans_CJK_KR',sans-serif] text-[#1c1c24]">
      <div className="flex min-h-0 flex-1 flex-col bg-[#f3f3f4]">
        <TitleBar />
        <MenuBar />
        <TopToolbar />
        <div className="flex min-h-0 flex-1 pb-px">
          <LeftToolbar />
          <main className="min-w-0 flex-1 border-t border-l border-[#b4b4b4]">
            <div className="relative h-full overflow-hidden border border-t-[#777] border-r-white border-b-white border-l-[#808080]">
              <Scene />
              <ContextMenu />
              <KeyOverlay />
            </div>
          </main>
          <Tray />
        </div>
        <StatusBar />
      </div>
    </div>
  );
}
